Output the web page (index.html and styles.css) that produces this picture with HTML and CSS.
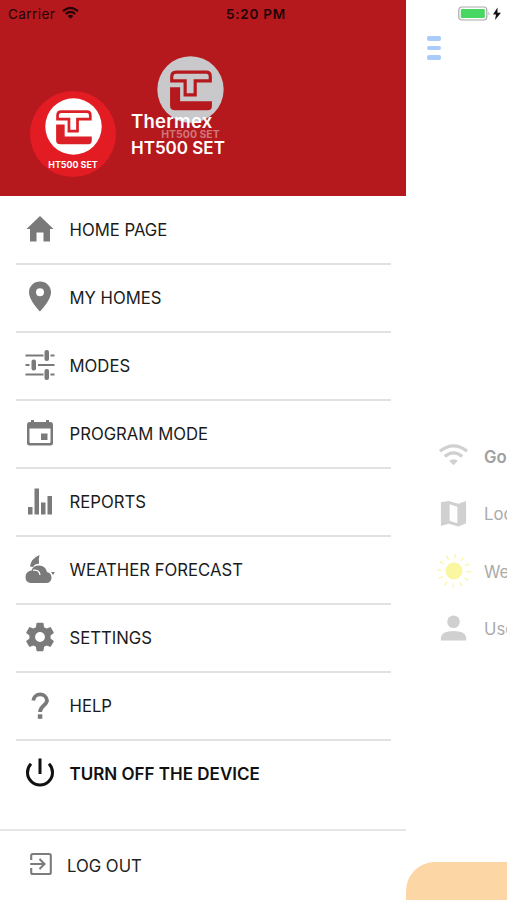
FILE: index.html
```html
<!DOCTYPE html>
<html lang="en">
<head>
<meta charset="utf-8">
<meta name="viewport" content="width=device-width">
<title>Thermex</title>
<link rel="stylesheet" href="styles.css">
</head>
<body>
<svg class="defs" aria-hidden="true">
  <symbol id="emblem" viewBox="0 0 200 200">
    <circle cx="100" cy="100" r="99" fill="currentColor"/>
    <path d="M44 74V62Q44 48 57 48H147Q159 48 159 61V74H114V116H84V74Z" fill="none" stroke="var(--mark)" stroke-width="9.5"/>
    <path d="M39 93H69V135H164V150Q164 162 152 162H53Q39 162 39 148Z" fill="var(--mark)"/>
  </symbol>
</svg>
<div class="screen">
  <aside class="drawer">
    <header class="head">
      <div class="avatar">
        <svg class="avatar-mark"><use href="#emblem"/></svg>
        <span class="avatar-name">HT500 SET</span>
      </div>
      <div class="device"><span>Thermex</span><span>HT500 SET</span></div>
      <div class="ghost">
        <svg class="ghost-mark"><use href="#emblem"/></svg>
        <span class="ghost-name">HT500 SET</span>
      </div>
    </header>
    <nav class="menu">
      <a class="item"><svg viewBox="0 0 32 32"><path d="M16 3L29.500 16H26V28.500H19.500V19.500H12.500V28.500H6V16H2.500z"/></svg><span>HOME PAGE</span></a>
      <a class="item"><svg viewBox="0 0 32 32"><path fill-rule="evenodd" d="M16 .5C9.800 .5 5 5.300 5 11.300C5 19.500 16 30.500 16 30.500S27 19.500 27 11.300C27 5.300 22.200 .5 16 .5zM16 15.200a4 4 0 1 1 0-8 4 4 0 0 1 0 8z"/></svg><span>MY HOMES</span></a>
      <a class="item"><svg viewBox="0 0 32 32"><path d="M1.500 6.500h18M26.500 6.500h4M1.500 16h4M14 16h16.500M1.500 25.500h18M26.500 25.500h4" fill="none" stroke="currentColor" stroke-width="2"/><rect x="20.500" y="1" width="4.500" height="11" rx="2"/><rect x="7.500" y="10.500" width="4.500" height="11" rx="2"/><rect x="20.500" y="20" width="4.500" height="11" rx="2"/></svg><span>MODES</span></a>
      <a class="item"><svg viewBox="0 0 32 32"><path d="M7 3h3v2h12V3h3v2h1.500Q29 5 29 8v18q0 2.500-2.500 2.500h-21Q3 28.500 3 26V8q0-3 2.500-3H7zM5.500 11.500V25q0 1 1 1h19q1 0 1-1V11.500z" fill-rule="evenodd"/><path d="M17 16.500h6.500V23H17z"/></svg><span>PROGRAM MODE</span></a>
      <a class="item"><svg viewBox="0 0 32 32"><path d="M4 22h4.500v7.500H4zM10.500 3.500H15v26h-4.500zM17 17.500h4.500v12H17zM23.500 11H28v18.500h-4.500z"/></svg><span>REPORTS</span></a>
      <a class="item"><svg viewBox="0 0 32 32"><path d="M6 13.500Q7 5.500 15.500 2Q14.300 6.500 15 10.700Q10.500 10.800 9 14Z"/><path d="M8 30Q1.500 30 1.500 24Q1.500 18.500 7.500 17.500Q9 12.500 15 12.500Q21.500 12.500 23 19Q27.500 20 27.500 25Q27 30 22 30Z"/><path d="M9 17.200Q15.500 16.500 16 22" fill="none" stroke="#fff" stroke-width="1.300"/><path d="M27 19h4l-2 3z"/></svg><span>WEATHER FORECAST</span></a>
      <a class="item"><svg class="gear" viewBox="0 0 24 24"><path d="M19.430 12.980c.04-.32.07-.64.07-.98s-.03-.66-.07-.98l2.110-1.650c.19-.15.24-.42.12-.64l-2-3.460c-.12-.22-.39-.3-.61-.22l-2.490 1c-.52-.4-1.080-.73-1.690-.98l-.38-2.650A.488.488 0 0 0 14 2h-4c-.25 0-.46.180-.49.420l-.38 2.650c-.61.250-1.170.590-1.690.980l-2.490-1c-.23-.09-.49 0-.61.220l-2 3.460c-.13.220-.07.490.12.640l2.110 1.650c-.04.320-.07.650-.07.980s.03.660.07.980l-2.110 1.650c-.19.150-.24.420-.12.640l2 3.460c.12.220.39.300.61.220l2.490-1c.52.400 1.080.730 1.690.980l.38 2.650c.03.240.24.420.49.420h4c.25 0 .46-.18.490-.42l.38-2.650c.61-.25 1.170-.59 1.690-.98l2.490 1c.23.090.49 0 .61-.22l2-3.460c.12-.22.07-.49-.12-.64zM12 15.500A3.500 3.500 0 1 1 12 8.500a3.500 3.500 0 0 1 0 7z"/></svg><span>SETTINGS</span></a>
      <a class="item"><svg viewBox="0 0 32 32"><path d="M9.300 11.500A6.900 6.900 0 0 1 23 11.500C23 16 16 17 16 23" fill="none" stroke="currentColor" stroke-width="3.800"/><path d="M13.800 25.300h4.500v4.500H13.800z"/></svg><span>HELP</span></a>
      <a class="item off"><svg viewBox="0 0 32 32"><path d="M16 1.500V17M7 6.800A12.500 12.500 0 1 0 25 6.800" fill="none" stroke="currentColor" stroke-width="3"/></svg><span>TURN OFF THE DEVICE</span></a>
    </nav>
    <a class="logout"><svg viewBox="0 0 24 24"><path d="M2.200 8V3.500Q2.200 2 3.700 2H20.300Q21.800 2 21.800 3.500V20.500Q21.800 22 20.300 22H3.700Q2.200 22 2.200 20.500V16M1.200 12H15.500M10.500 7L15.500 12L10.500 17" fill="none" stroke="currentColor" stroke-width="2.100"/></svg><span>LOG OUT</span></a>
  </aside>
  <main class="page">
    <div class="burger"><i></i><i></i><i></i></div>
    <ul class="info">
      <li><svg viewBox="0 0 32 32"><path d="M2 11.500Q16 .5 30 11.500M7 17Q16 9.500 25 17" fill="none" stroke="currentColor" stroke-width="3.300"/><path d="M11.500 21.500Q16 18 20.500 21.500L16 26z"/></svg><b>Good</b></li>
      <li><svg viewBox="0 0 32 32"><path fill-rule="evenodd" d="M3 4.500L11 3L21 6L29 3V26L21 29.500L11 26.500L3 29zM12 6.500V23.500L20 26V9z"/></svg><span>Location</span></li>
      <li><svg class="sun" viewBox="0 0 36 36"><circle cx="18" cy="18" r="8.500"/><circle cx="18" cy="18" r="14.600" fill="none" stroke="currentColor" stroke-width="4.500" stroke-dasharray="1.300 6.345"/></svg><span>Weather</span></li>
      <li><svg viewBox="0 0 32 32"><circle cx="16" cy="9" r="6.500"/><path d="M3 28.500V25Q4 18.500 16 18.500T29 25V28.500z"/></svg><span>User</span></li>
    </ul>
    <div class="panel"></div>
  </main>
  <div class="status">
    <span class="carrier">Carrier</span>
    <svg class="wifi" viewBox="0 0 17 12"><path d="M1 4.200Q8.500-2.300 16 4.200M3.700 7Q8.500 2.800 13.300 7" fill="none" stroke="currentColor" stroke-width="2.200"/><path d="M5.700 8.900Q8.500 6.700 11.300 8.900L8.500 11.700z"/></svg>
    <span class="clock">5:20 PM</span>
    <svg class="battery" viewBox="0 0 44 16"><rect x=".8" y="1" width="28" height="13" rx="3" fill="#fff" stroke="#aaa" stroke-width="1.200"/><rect x="2.800" y="3" width="24" height="9" rx="1" fill="#48d762"/><path d="M30.500 5.500q2 2 0 4z" fill="#aaa"/><path d="M39.500 1.500L35 8.500H38L37 14L43 6.800H39.500z" fill="#111"/></svg>
  </div>
</div>
</body>
</html>
```
FILE: styles.css
```css
* { box-sizing: border-box; }
body { margin: 0; background: #fff; font-family: Inter, "Liberation Sans", sans-serif; }
.defs { position: absolute; width: 0; height: 0; }
.screen { position: relative; display: flex; width: 507px; height: 900px; overflow: hidden; }
svg { display: block; flex: none; fill: currentColor; }
span, b { white-space: nowrap; }

.status { position: absolute; left: 0; top: 0; width: 507px; height: 27px; display: flex; align-items: center; padding-left: 8px; color: #210507; }
.carrier { width: 47px; font-size: 13.5px; letter-spacing: .45px; }
.wifi { width: 17px; height: 12px; margin-left: 7px; margin-top: -1px; }
.clock { width: 62px; margin-left: 147px; font-size: 13.5px; font-weight: 600; letter-spacing: .75px; }
.battery { width: 44px; height: 16px; margin-left: 170px; }

.drawer { width: 406px; height: 900px; display: flex; flex-direction: column; background: #fff; }
.head { position: relative; height: 196px; flex: none; padding: 91px 0 0 30px; display: flex; gap: 15px; background: #b5191d; }
.avatar { width: 86px; height: 86px; border-radius: 50%; background: #e31b23; color: #fff; --mark: #dc2027; display: flex; flex-direction: column; align-items: center; padding-top: 7px; }
.avatar-mark { width: 57px; height: 57px; }
.avatar-name { margin-top: 4px; font-size: 8.9px; line-height: 12px; font-weight: 700; }
.device { position: relative; z-index: 1; display: flex; flex-direction: column; padding-top: 17px; color: #fff; font-size: 17px; line-height: 27px; font-weight: 600; }
.device span:first-child { font-size: 18.5px; letter-spacing: .25px; }
.ghost { position: absolute; left: 157px; top: 56px; width: 67px; display: flex; flex-direction: column; align-items: center; color: #c9c9cb; --mark: #b5191d; }
.ghost-mark { width: 67px; height: 67px; }
.ghost-name { margin-top: 5px; font-size: 10.5px; line-height: 14px; font-weight: 700; color: #cf777a; }

.menu { padding: 1px 15px 0 16px; flex: none; }
.item { height: 68px; display: flex; align-items: center; padding: 0 0 2px 8px; color: #7a7a7a; border-bottom: 2px solid #e1e1e1; }
.item svg { width: 32px; height: 32px; }
.item .gear { width: 34px; height: 34px; margin: 0 -1px; }
.item span { margin-left: 13.5px; padding-top: 1px; font-size: 16.7px; color: #1b1b1b; }
.item.off { color: #111; border: 0; padding-bottom: 4px; }
.item.off span { font-size: 17px; font-weight: 600; color: #111; }
.logout { margin-top: 20px; height: 71px; border-top: 2px solid #e6e6e6; display: flex; align-items: center; padding-left: 29px; color: #7c7c7c; }
.logout svg { width: 24px; height: 24px; margin-top: -3px; }
.logout span { margin-left: 14px; font-size: 16.7px; color: #222; }

.page { width: 101px; height: 900px; display: flex; flex-direction: column; overflow: hidden; }
.burger { margin: 36px 0 0 21px; width: 14px; display: grid; gap: 5px; }
.burger i { height: 4.7px; border-radius: 2px; background: #a9ccfb; }
.info { list-style: none; margin: 367px 0 0; padding: 0 0 0 32px; color: #d0d0d0; }
.info li { height: 57.5px; display: flex; align-items: center; gap: 15px; }
.info svg { width: 31px; height: 31px; }
.info .sun { width: 36px; height: 36px; margin: 0 -2.5px; color: #fbf6a0; }
.info span, .info b { font-size: 16.7px; color: #aaa; padding-top: 2px; }
.info b { font-weight: 600; color: #a0a0a0; }
.panel { margin-top: auto; flex: none; width: 130px; height: 38px; border-radius: 29px 0 0 0; background: #fdd6a5; }
```
